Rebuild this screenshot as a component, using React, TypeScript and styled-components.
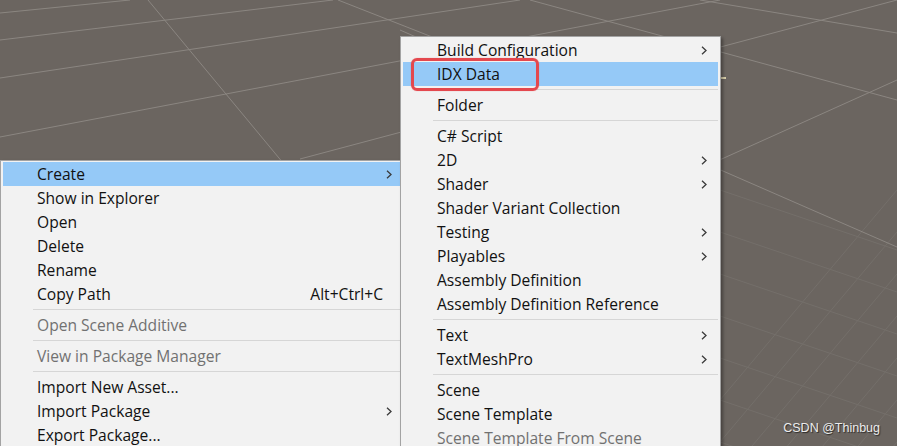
import { FC } from 'react';
import styled, { createGlobalStyle } from 'styled-components';

type Entry =
  | { kind: 'item'; label: string; sub?: boolean; shortcut?: string; active?: boolean; disabled?: boolean }
  | { kind: 'sep' };

const projectMenu: Entry[] = [
  { kind: 'item', label: 'Create', sub: true, active: true },
  { kind: 'item', label: 'Show in Explorer' },
  { kind: 'item', label: 'Open' },
  { kind: 'item', label: 'Delete' },
  { kind: 'item', label: 'Rename' },
  { kind: 'item', label: 'Copy Path', shortcut: 'Alt+Ctrl+C' },
  { kind: 'sep' },
  { kind: 'item', label: 'Open Scene Additive', disabled: true },
  { kind: 'sep' },
  { kind: 'item', label: 'View in Package Manager', disabled: true },
  { kind: 'sep' },
  { kind: 'item', label: 'Import New Asset...' },
  { kind: 'item', label: 'Import Package', sub: true },
  { kind: 'item', label: 'Export Package...' },
];

const createMenu: Entry[] = [
  { kind: 'item', label: 'Build Configuration', sub: true },
  { kind: 'item', label: 'IDX Data', active: true },
  { kind: 'sep' },
  { kind: 'item', label: 'Folder' },
  { kind: 'sep' },
  { kind: 'item', label: 'C# Script' },
  { kind: 'item', label: '2D', sub: true },
  { kind: 'item', label: 'Shader', sub: true },
  { kind: 'item', label: 'Shader Variant Collection' },
  { kind: 'item', label: 'Testing', sub: true },
  { kind: 'item', label: 'Playables', sub: true },
  { kind: 'item', label: 'Assembly Definition' },
  { kind: 'item', label: 'Assembly Definition Reference' },
  { kind: 'sep' },
  { kind: 'item', label: 'Text', sub: true },
  { kind: 'item', label: 'TextMeshPro', sub: true },
  { kind: 'sep' },
  { kind: 'item', label: 'Scene' },
  { kind: 'item', label: 'Scene Template' },
  { kind: 'item', label: 'Scene Template From Scene', disabled: true },
];

// major grid lines of the scene view, [x1, y1, x2, y2]
const majorLines: number[][] = [
  [0, 13, 130, 0],
  [0, 40, 333, 0],
  [0, 78, 520, 0],
  [0, 137, 720, 0],
  [300, 159, 897, 0],
  [400, 304, 897, 80],
  [148, 0, 400, 304],
  [338, 0, 720, 150],
  [530, 0, 897, 100],
  [700, 0, 897, 33],
  [400, 30, 897, 247],
];

const minorLines: number[][] = [0, 1, 2, 3, 4, 5, 6, 7].flatMap((k) => [
  [720, 300 + k * 42 + 100, 897, 190 + k * 42],
  [720, 190 + k * 42, 897, 250 + k * 42],
]);

const GlobalStyle = createGlobalStyle`
  body {
    margin: 0;
    overflow: hidden;
    background: #6b6560;
  }
`;

const Scene = styled.div`
  position: relative;
  width: 897px;
  height: 446px;
  overflow: hidden;
  background: #6b6560;
  font-family: 'Open Sans', 'Noto Sans', sans-serif;
`;

const GridArt = styled.svg`
  position: absolute;
  inset: 0;
`;

const Gizmo = styled.svg`
  position: absolute;
  left: 719px;
  top: 70px;
`;

const Menu = styled.div<{ $left: number; $top: number; $width: number }>`
  position: absolute;
  left: ${(p) => p.$left}px;
  top: ${(p) => p.$top}px;
  width: ${(p) => p.$width}px;
  box-sizing: border-box;
  display: flex;
  flex-direction: column;
  padding: 1px 2px;
  background: #f2f2f2;
  border: 1px solid #a3a3a3;
  box-shadow: 2px 2px 3px rgba(0, 0, 0, 0.35);
`;

const Item = styled.div<{ $active?: boolean; $disabled?: boolean }>`
  display: flex;
  align-items: center;
  height: 24px;
  padding: 0 11px 0 34px;
  background: ${(p) => (p.$active ? '#95c9f7' : 'transparent')};
  color: ${(p) => (p.$disabled ? '#717171' : '#111111')};
  font-size: 15.6px;
  line-height: 24px;
  white-space: nowrap;
`;

const Label = styled.span`
  flex: 1;
`;

const Shortcut = styled.span`
  margin-right: 3px;
`;

const ArrowSlot = styled.span`
  display: flex;
  width: 6px;
  justify-content: flex-end;
`;

const Separator = styled.div`
  height: 1px;
  margin: 3px 0 3px 30px;
  background: #d6d6d6;
`;

const Callout = styled.div`
  position: absolute;
  left: 10px;
  top: 21px;
  width: 128px;
  height: 33px;
  box-sizing: border-box;
  border: 3px solid #e4484e;
  border-radius: 6px;
  box-shadow: 0 0 1px rgba(228, 72, 78, 0.6);
`;

const Watermark = styled.div`
  position: absolute;
  right: 17px;
  bottom: 11px;
  color: #ececec;
  font-family: 'Liberation Sans', Arial, sans-serif;
  font-size: 12.5px;
  text-shadow: 1px 1px 1px rgba(0, 0, 0, 0.6);
`;

const Chevron: FC = () => (
  <svg width="6" height="9" viewBox="0 0 6 9">
    <polyline points="1,0.8 5,4.5 1,8.2" fill="none" stroke="#3a3a3a" strokeWidth="1.3" />
  </svg>
);

const ContextMenu: FC<{ entries: Entry[]; left: number; top: number; width: number; callout?: boolean }> = ({
  entries,
  left,
  top,
  width,
  callout,
}) => (
  <Menu $left={left} $top={top} $width={width}>
    {entries.map((e, i) =>
      e.kind === 'sep' ? (
        <Separator key={i} />
      ) : (
        <Item key={i} $active={e.active} $disabled={e.disabled}>
          <Label>{e.label}</Label>
          {e.shortcut && <Shortcut>{e.shortcut}</Shortcut>}
          <ArrowSlot>{e.sub && <Chevron />}</ArrowSlot>
        </Item>
      ),
    )}
    {callout && <Callout />}
  </Menu>
);

const App: FC = () => (
  <Scene>
    <GlobalStyle />
    <GridArt width="897" height="446" viewBox="0 0 897 446">
      {minorLines.map((l, i) => (
        <line key={`m${i}`} x1={l[0]} y1={l[1]} x2={l[2]} y2={l[3]} stroke="#746f6a" strokeWidth="1" />
      ))}
      {majorLines.map((l, i) => (
        <line key={i} x1={l[0]} y1={l[1]} x2={l[2]} y2={l[3]} stroke="#8b8681" strokeWidth="1" />
      ))}
    </GridArt>
    <Gizmo width="8" height="14" viewBox="0 0 8 14">
      <rect x="1" y="7" width="6" height="2" fill="#d9d0ab" />
      <rect x="1" y="2" width="1" height="10" fill="#a9a392" />
    </Gizmo>
    <ContextMenu entries={projectMenu} left={0} top={160} width={406} />
    <ContextMenu entries={createMenu} left={400} top={36} width={321} callout />
    <Watermark>CSDN @Thinbug</Watermark>
  </Scene>
);

export default App;
